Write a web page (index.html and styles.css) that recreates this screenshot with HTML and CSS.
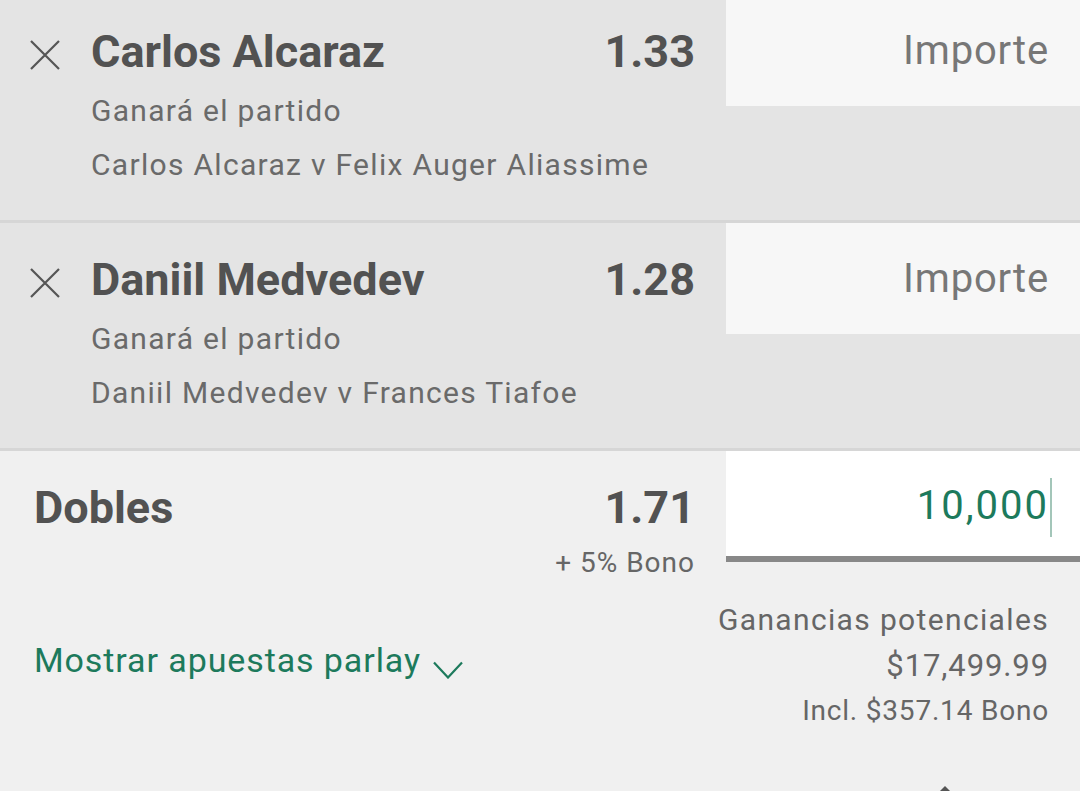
FILE: index.html
```html
<!DOCTYPE html>
<html lang="es">
<head>
<meta charset="utf-8">
<title>Boleto</title>
<link rel="stylesheet" href="styles.css">
</head>
<body>
<div class="slip">
  <div class="bet first">
    <div class="bet-info">
      <span class="remove"><svg width="30" height="30" viewBox="0 0 30 30"><path d="M1 1 L29 29 M29 1 L1 29" stroke="#555" stroke-width="2.2" fill="none"/></svg></span>
      <div class="bet-text">
        <div class="bet-head"><span class="name">Carlos Alcaraz</span><span class="odds">1.33</span></div>
        <div class="market">Ganará el partido</div>
        <div class="event">Carlos Alcaraz v Felix Auger Aliassime</div>
      </div>
    </div>
    <div class="stake"><span class="placeholder">Importe</span></div>
  </div>
  <div class="bet">
    <div class="bet-info">
      <span class="remove"><svg width="30" height="30" viewBox="0 0 30 30"><path d="M1 1 L29 29 M29 1 L1 29" stroke="#555" stroke-width="2.2" fill="none"/></svg></span>
      <div class="bet-text">
        <div class="bet-head"><span class="name">Daniil Medvedev</span><span class="odds">1.28</span></div>
        <div class="market">Ganará el partido</div>
        <div class="event">Daniil Medvedev v Frances Tiafoe</div>
      </div>
    </div>
    <div class="stake"><span class="placeholder">Importe</span></div>
  </div>
  <div class="multi">
    <div class="multi-left">
      <div class="bet-head"><span class="name">Dobles</span><span class="odds">1.71</span></div>
      <div class="bonus">+ 5% Bono</div>
      <div class="parlay">Mostrar apuestas parlay<svg class="chev" width="30" height="18" viewBox="0 0 30 18"><path d="M1 1.5 L15 16.5 L29 1.5" stroke="#1d7a5c" stroke-width="2.2" fill="none"/></svg></div>
    </div>
    <div class="multi-right">
      <div class="stake active"><span class="value">10,000</span><span class="caret"></span></div>
      <div class="returns">
        <div class="ret-label">Ganancias potenciales</div>
        <div class="ret-amount">$17,499.99</div>
        <div class="ret-bonus">Incl. $357.14 Bono</div>
      </div>
      <div class="tip"></div>
    </div>
  </div>
</div>
</body>
</html>
```

FILE: styles.css
```css
html, body {
  margin: 0;
  padding: 0;
}
body {
  background: #f0f0f0;
  font-family: Roboto, "Liberation Sans", sans-serif;
  overflow: hidden;
}
.slip {
  width: 1080px;
}
.bet {
  display: flex;
  height: 225px;
  background: #e4e4e4;
  border-bottom: 3px solid #d6d6d6;
}
.bet.first {
  margin-top: -5px;
}
.bet-info {
  width: 726px;
  box-sizing: border-box;
  padding: 29px 31px 0 30px;
  display: flex;
  gap: 31px;
}
.remove {
  width: 30px;
  height: 30px;
  margin-top: 16px;
  flex: none;
}
.remove svg {
  display: block;
}
.bet-text {
  flex: 1;
}
.bet-head {
  display: flex;
  justify-content: space-between;
  align-items: baseline;
  font-size: 45px;
  line-height: 56px;
  font-weight: 700;
  color: #525252;
}
.market, .event {
  font-size: 30px;
  line-height: 54px;
  letter-spacing: 1.3px;
  color: #6a6a6a;
}
.market {
  margin-top: 4px;
}
.stake {
  width: 354px;
  height: 111px;
  box-sizing: border-box;
  flex: none;
  background: #f7f7f7;
  display: flex;
  align-items: center;
  justify-content: flex-end;
  padding-right: 31px;
  font-size: 40px;
  letter-spacing: 0.85px;
  color: #777;
}
.multi {
  display: flex;
  height: 340px;
  background: #f0f0f0;
}
.multi-left {
  width: 726px;
  flex: none;
  box-sizing: border-box;
  padding: 29px 31px 0 34px;
}
.bonus {
  margin-top: 10px;
  text-align: right;
  font-size: 28px;
  line-height: 34px;
  letter-spacing: 1px;
  color: #666;
}
.parlay {
  margin-top: 60px;
  font-size: 34px;
  line-height: 40px;
  letter-spacing: 0.9px;
  color: #1d7a5c;
}
.chev {
  margin-left: 12px;
  vertical-align: -7px;
}
.multi-right {
  width: 354px;
  flex: none;
}
.stake.active {
  height: 111px;
  background: #fff;
  border-bottom: 6px solid #888;
  color: #1d7a5c;
  padding-right: 28px;
  letter-spacing: 2px;
}
.value {
  font-size: 40px;
  margin-top: 3px;
}
.caret {
  display: inline-block;
  width: 2px;
  height: 59px;
  margin-left: 1px;
  margin-top: 8px;
  background: #a3c6b9;
}
.returns {
  margin-top: 35px;
  padding-right: 31px;
  display: flex;
  flex-direction: column;
  align-items: flex-end;
  white-space: nowrap;
  color: #666;
}
.ret-label {
  font-size: 30px;
  line-height: 46px;
  letter-spacing: 1.35px;
}
.ret-amount {
  font-size: 31px;
  line-height: 46px;
  letter-spacing: 0.9px;
}
.ret-bonus {
  font-size: 28px;
  line-height: 43px;
  letter-spacing: 0.8px;
}
.tip {
  margin: 54px 0 0 212px;
  width: 0;
  height: 0;
  border-left: 7px solid transparent;
  border-right: 7px solid transparent;
  border-bottom: 7px solid #555;
}
```
